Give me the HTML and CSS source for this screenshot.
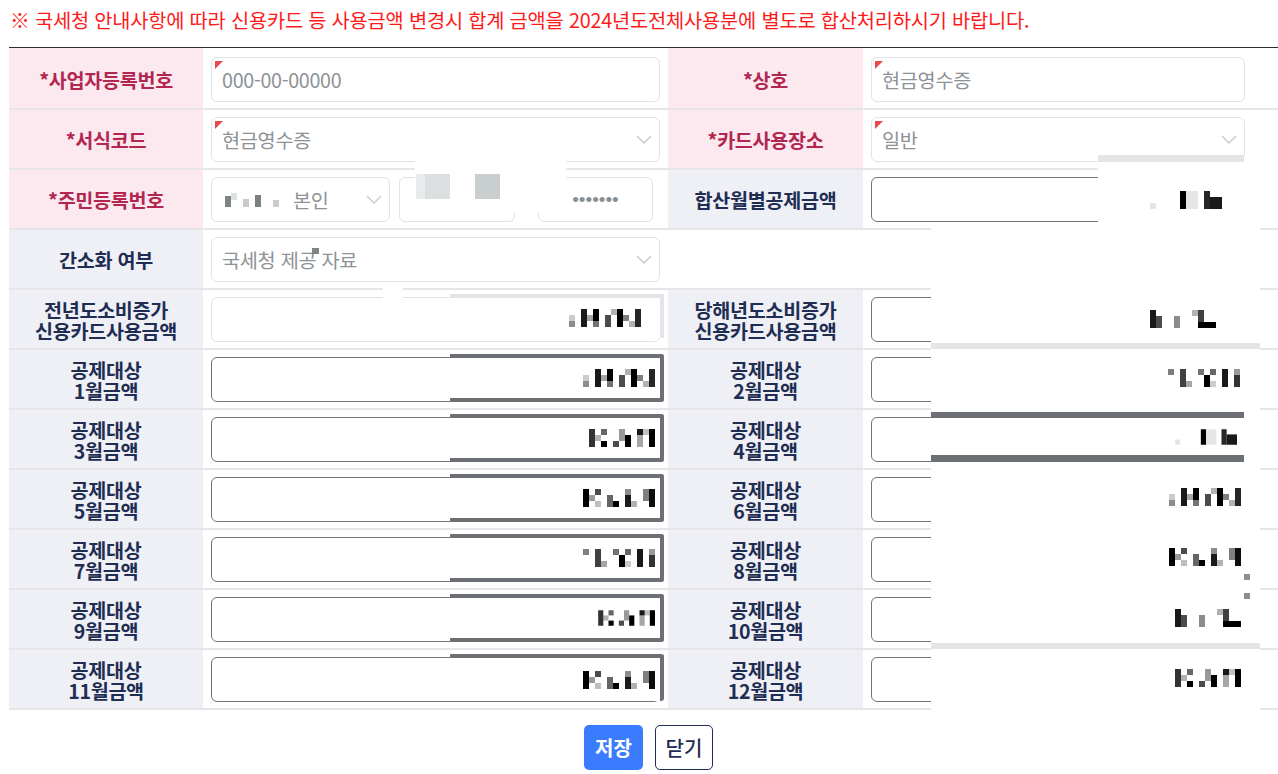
FILE: index.html
```html
<!DOCTYPE html>
<html lang="ko">
<head>
    <meta charset="UTF-8">
    <meta name="viewport" content="width=device-width, initial-scale=1">
    <title>신용카드 사용금액</title>
    <link rel="stylesheet" href="styles.css">
</head>
<body>

<!-- 모자이크 패턴 -->
<svg class="defs" aria-hidden="true">
    <symbol id="mz1" viewBox="0 0 72 18">
        <rect x="0" y="6" width="6" height="6" fill-opacity=".2"/>
        <rect x="0" y="12" width="6" height="6" fill-opacity=".45"/>
        <rect x="12" y="0" width="6" height="18" fill-opacity=".9"/>
        <rect x="18" y="6" width="6" height="6" fill-opacity=".35"/>
        <rect x="24" y="0" width="6" height="12" fill-opacity="1"/>
        <rect x="24" y="12" width="6" height="6" fill-opacity=".55"/>
        <rect x="36" y="6" width="6" height="12" fill-opacity=".7"/>
        <rect x="42" y="0" width="6" height="6" fill-opacity=".3"/>
        <rect x="48" y="0" width="6" height="18" fill-opacity="1"/>
        <rect x="54" y="6" width="6" height="6" fill-opacity=".5"/>
        <rect x="60" y="12" width="6" height="6" fill-opacity=".3"/>
        <rect x="66" y="0" width="6" height="18" fill-opacity=".85"/>
    </symbol>
    <symbol id="mz2" viewBox="0 0 72 18">
        <rect x="6" y="0" width="6" height="18" fill-opacity=".8"/>
        <rect x="12" y="6" width="6" height="6" fill-opacity=".3"/>
        <rect x="18" y="0" width="6" height="6" fill-opacity=".6"/>
        <rect x="18" y="12" width="6" height="6" fill-opacity="1"/>
        <rect x="30" y="12" width="6" height="6" fill-opacity=".7"/>
        <rect x="36" y="0" width="6" height="12" fill-opacity=".4"/>
        <rect x="42" y="6" width="6" height="12" fill-opacity="1"/>
        <rect x="54" y="0" width="6" height="6" fill-opacity=".9"/>
        <rect x="54" y="6" width="6" height="12" fill-opacity=".35"/>
        <rect x="60" y="0" width="6" height="6" fill-opacity=".25"/>
        <rect x="66" y="0" width="6" height="18" fill-opacity="1"/>
    </symbol>
    <symbol id="mz3" viewBox="0 0 72 18">
        <rect x="0" y="0" width="6" height="18" fill-opacity="1"/>
        <rect x="6" y="6" width="6" height="6" fill-opacity=".4"/>
        <rect x="12" y="0" width="6" height="6" fill-opacity=".7"/>
        <rect x="12" y="12" width="6" height="6" fill-opacity=".25"/>
        <rect x="24" y="6" width="6" height="12" fill-opacity=".6"/>
        <rect x="30" y="12" width="6" height="6" fill-opacity="1"/>
        <rect x="42" y="0" width="6" height="6" fill-opacity=".45"/>
        <rect x="42" y="6" width="6" height="12" fill-opacity=".9"/>
        <rect x="48" y="12" width="6" height="6" fill-opacity=".3"/>
        <rect x="60" y="0" width="6" height="12" fill-opacity=".5"/>
        <rect x="66" y="0" width="6" height="18" fill-opacity=".95"/>
    </symbol>
    <symbol id="mz4" viewBox="0 0 72 18">
        <rect x="0" y="0" width="6" height="6" fill-opacity=".5"/>
        <rect x="12" y="0" width="6" height="18" fill-opacity=".75"/>
        <rect x="18" y="12" width="6" height="6" fill-opacity=".35"/>
        <rect x="30" y="0" width="6" height="6" fill-opacity=".55"/>
        <rect x="36" y="6" width="6" height="12" fill-opacity="1"/>
        <rect x="42" y="0" width="6" height="6" fill-opacity=".6"/>
        <rect x="42" y="12" width="6" height="6" fill-opacity=".2"/>
        <rect x="54" y="0" width="6" height="18" fill-opacity=".9"/>
        <rect x="66" y="0" width="6" height="6" fill-opacity=".4"/>
        <rect x="66" y="6" width="6" height="12" fill-opacity=".8"/>
    </symbol>
    <symbol id="mz5" viewBox="0 0 72 18">
        <rect x="0" y="12" width="6" height="6" fill-opacity=".1"/>
        <rect x="30" y="0" width="6" height="18" fill-opacity="1"/>
        <rect x="36" y="0" width="12" height="18" fill-opacity=".1"/>
        <rect x="54" y="0" width="6" height="18" fill-opacity=".85"/>
        <rect x="60" y="6" width="12" height="12" fill-opacity=".9"/>
    </symbol>
    <symbol id="mz6" viewBox="0 0 72 18">
        <rect x="0" y="0" width="6" height="18" fill-opacity=".9"/>
        <rect x="6" y="6" width="6" height="12" fill-opacity=".7"/>
        <rect x="24" y="6" width="6" height="12" fill-opacity=".45"/>
        <rect x="42" y="0" width="6" height="6" fill-opacity=".3"/>
        <rect x="48" y="0" width="6" height="12" fill-opacity=".75"/>
        <rect x="48" y="12" width="18" height="6" fill-opacity="1"/>
    </symbol>
    <symbol id="chev" viewBox="0 0 16 9">
        <polyline points="1,1 8,8 15,1" fill="none" stroke="#c8c9cb" stroke-width="1.4"/>
    </symbol>
</svg>

<div class="page">
    <p class="notice">※ 국세청 안내사항에 따라 신용카드 등 사용금액 변경시 합계 금액을 2024년도전체사용분에 별도로 합산처리하시기 바랍니다.</p>

    <table class="form-table">
        <colgroup>
            <col class="c-label"><col class="c-field"><col class="c-label2"><col class="c-field2">
        </colgroup>
        <tbody>
            <tr>
                <th class="req">*사업자등록번호</th>
                <td><div class="field req"><span>000-00-00000</span></div></td>
                <th class="req">*상호</th>
                <td class="c4"><div class="field req"><span>현금영수증</span></div></td>
            </tr>
            <tr>
                <th class="req">*서식코드</th>
                <td><div class="field req select"><span>현금영수증</span><svg class="chev"><use href="#chev"/></svg></div></td>
                <th class="req">*카드사용장소</th>
                <td class="c4"><div class="field req select"><span>일반</span><svg class="chev"><use href="#chev"/></svg></div></td>
            </tr>
            <tr>
                <th class="req">*주민등록번호</th>
                <td>
                    <div class="multi">
                        <div class="field select f-rel">
                            <svg class="mz-id" width="62" height="14" viewBox="0 0 62 14">
                                <rect x="0" y="3" width="6" height="11" fill="#7e8484"/>
                                <rect x="6" y="0" width="6" height="7" fill="#dfe1e1"/>
                                <rect x="18" y="6" width="6" height="8" fill="#c9cccc"/>
                                <rect x="30" y="2" width="6" height="12" fill="#7b8181"/>
                                <rect x="48" y="7" width="6" height="7" fill="#c9cccc"/>
                            </svg>
                            <span>본인</span><svg class="chev"><use href="#chev"/></svg>
                        </div>
                        <div class="field f-name"></div>
                        <div class="field f-pw"><span class="dots">•••••••</span></div>
                    </div>
                </td>
                <th>합산월별공제금액</th>
                <td class="c4"><div class="field edit"></div></td>
            </tr>
            <tr>
                <th>간소화 여부</th>
                <td><div class="field select"><span>국세청 제공 자료</span><svg class="chev"><use href="#chev"/></svg></div></td>
                <td class="empty" colspan="2"></td>
            </tr>
            <tr>
                <th>전년도소비증가<br>신용카드사용금액</th>
                <td>
                    <div class="field">
                        <div class="cover light"><svg class="mz gray wide"><use href="#mz1"/></svg></div>
                    </div>
                </td>
                <th>당해년도소비증가<br>신용카드사용금액</th>
                <td class="c4"><div class="field edit"></div></td>
            </tr>
            <tr>
                <th>공제대상<br>1월금액</th>
                <td><div class="field edit"><div class="cover"><svg class="mz"><use href="#mz1"/></svg></div></div></td>
                <th>공제대상<br>2월금액</th>
                <td class="c4"><div class="field edit"></div></td>
            </tr>
            <tr>
                <th>공제대상<br>3월금액</th>
                <td><div class="field edit"><div class="cover"><svg class="mz"><use href="#mz2"/></svg></div></div></td>
                <th>공제대상<br>4월금액</th>
                <td class="c4"><div class="field edit"></div></td>
            </tr>
            <tr>
                <th>공제대상<br>5월금액</th>
                <td><div class="field edit"><div class="cover"><svg class="mz"><use href="#mz3"/></svg></div></div></td>
                <th>공제대상<br>6월금액</th>
                <td class="c4"><div class="field edit"></div></td>
            </tr>
            <tr>
                <th>공제대상<br>7월금액</th>
                <td><div class="field edit"><div class="cover"><svg class="mz"><use href="#mz4"/></svg></div></div></td>
                <th>공제대상<br>8월금액</th>
                <td class="c4"><div class="field edit"></div></td>
            </tr>
            <tr>
                <th>공제대상<br>9월금액</th>
                <td><div class="field edit"><div class="cover"><svg class="mz short"><use href="#mz2"/></svg></div></div></td>
                <th>공제대상<br>10월금액</th>
                <td class="c4"><div class="field edit"></div></td>
            </tr>
            <tr>
                <th>공제대상<br>11월금액</th>
                <td><div class="field edit"><div class="cover top-only"><svg class="mz"><use href="#mz3"/></svg></div></div></td>
                <th>공제대상<br>12월금액</th>
                <td class="c4"><div class="field edit"></div></td>
            </tr>
        </tbody>
    </table>

    <div class="btn-bar">
        <button class="btn btn-save">저장</button>
        <button class="btn btn-close">닫기</button>
    </div>

    <!-- 가림 처리 -->
    <div class="blot blot-id"><i class="sq sq1"></i><i class="sq sq2"></i></div>
    <div class="blot blot-gong"><i class="sq sq3"></i></div>
    <div class="blot blot-notch"></div>

    <div class="blot blot-a">
        <svg class="mz m-a"><use href="#mz5"/></svg>
    </div>
    <div class="blot blot-b">
        <i class="bar bar-l1"></i>
        <i class="bar bar-d1"></i>
        <i class="bar bar-d2"></i>
        <i class="bar bar-l2"></i>
        <i class="sq sq4"></i>
        <i class="sq sq5"></i>
        <svg class="mz m-r5"><use href="#mz6"/></svg>
        <svg class="mz m-r6"><use href="#mz4"/></svg>
        <svg class="mz m-r7 short"><use href="#mz5"/></svg>
        <svg class="mz m-r8"><use href="#mz1"/></svg>
        <svg class="mz m-r9"><use href="#mz3"/></svg>
        <svg class="mz m-r10"><use href="#mz6"/></svg>
        <svg class="mz m-r11"><use href="#mz2"/></svg>
    </div>
</div>

</body>
</html>
```

FILE: styles.css
```css
html {
    overflow: hidden;
}

body {
    margin: 0;
    background: #fff;
    font-family: "Noto Sans CJK KR", "Noto Sans", sans-serif;
}

.defs {
    position: absolute;
    width: 0;
    height: 0;
}

.page {
    position: relative;
    width: 1288px;
    padding-left: 9px;
    box-sizing: border-box;
}

.notice {
    margin: 0;
    height: 47px;
    box-sizing: border-box;
    padding: 7px 0 0 1px;
    font-size: 19.8px;
    line-height: 26px;
    color: #ff1a1a;
    letter-spacing: -0.2px;
    white-space: nowrap;
}

/* 입력 테이블 */
.form-table {
    width: 1279px;
    border-collapse: collapse;
    table-layout: fixed;
    border-top: 1px solid #2e2e2e;
}

.c-label { width: 194px; }
.c-field { width: 465px; }
.c-label2 { width: 195px; }
.c-field2 { width: 425px; }

th, td {
    padding: 7px 8px 6px;
    border-bottom: 2px solid #e6e6e8;
    vertical-align: middle;
}

tr:first-child > th,
tr:first-child > td {
    padding-top: 9px;
}

th {
    background: #eef0f6;
    color: #1f2d52;
    font-size: 19.6px;
    font-weight: 700;
    line-height: 21px;
    letter-spacing: -0.3px;
    text-align: center;
    white-space: nowrap;
}

th.req {
    background: #fbe9ef;
    color: #b2264f;
}

td.c4 {
    padding-right: 43px;
}

td.empty {
    background: #fff;
}

.field {
    position: relative;
    display: flex;
    align-items: center;
    height: 45px;
    box-sizing: border-box;
    padding: 0 10px;
    border: 1px solid #e1e2e4;
    border-radius: 6px;
    background: #fff;
    color: #8d9296;
    font-size: 19.7px;
    letter-spacing: -0.3px;
    white-space: nowrap;
}

.field.edit {
    border-color: #747474;
}

.field.req::before {
    content: "";
    position: absolute;
    left: 3px;
    top: 3px;
    border-style: solid;
    border-width: 8px 8px 0 0;
    border-color: #e9494b transparent transparent transparent;
}

.field.select {
    padding-right: 7px;
}

.chev {
    width: 16px;
    height: 9px;
    margin-left: auto;
    flex: none;
}

/* 주민등록번호 */
.multi {
    display: flex;
}

.f-rel { width: 179px; }
.f-name { width: 116px; margin-left: 9px; }
.f-pw { width: 115px; margin-left: 23px; justify-content: center; }

.mz-id {
    flex: none;
    margin: 0 6px 0 3px;
}

.dots {
    font-family: "Liberation Sans", sans-serif;
    font-size: 19px;
    letter-spacing: 0;
    color: #8a8f93;
}

/* 가림 */
.cover {
    position: absolute;
    left: 238px;
    right: -5px;
    top: -4px;
    bottom: -1px;
    display: flex;
    align-items: center;
    justify-content: flex-end;
    padding-right: 5px;
    background: #fff;
    border: 4px solid #6c7075;
    border-left: none;
    border-radius: 0 3px 3px 0;
}

.cover.top-only {
    border-bottom: none;
    bottom: 0;
}

.cover.light {
    top: -4px;
    bottom: 3px;
    border-color: #e4e5e8;
    border-bottom: none;
    border-radius: 0;
}

.mz {
    width: 72px;
    height: 18px;
    color: #1b2f5b;
}

.mz.wide { width: 100px; }
.mz.short { width: 62px; }

.mz.gray {
    color: #747879;
}

.blot {
    position: absolute;
    background: #fff;
}

.sq, .bar {
    position: absolute;
    display: block;
}

.blot-id {
    left: 415px;
    top: 155px;
    width: 151px;
    height: 58px;
}

.sq1 { left: 1px; top: 19px; width: 34px; height: 25px; background: linear-gradient(90deg, #e8eaeb 9px, #dcdfe0 9px); }
.sq2 { left: 60px; top: 19px; width: 25px; height: 25px; background: #c9cfce; }

.blot-gong {
    left: 302px;
    top: 243px;
    width: 18px;
    height: 8px;
}

.sq3 { left: 10px; top: 5px; width: 7px; height: 6px; background: #7f8485; }

.blot-notch {
    left: 383px;
    top: 283px;
    width: 20px;
    height: 17px;
}

.blot-a {
    left: 1098px;
    top: 155px;
    width: 180px;
    height: 73px;
}

.blot-a::before {
    content: "";
    position: absolute;
    left: 0;
    top: 0;
    width: 146px;
    height: 7px;
    background: #e4e5e7;
}

.m-a { position: absolute; left: 52px; top: 36px; }

.blot-b {
    left: 931px;
    top: 228px;
    width: 329px;
    height: 484px;
}

.bar-l1 { left: 0; top: 115px; width: 329px; height: 6px; background: #e4e5e7; }
.bar-d1 { left: 0; top: 184px; width: 313px; height: 6px; background: #6c7075; }
.bar-d2 { left: 0; top: 227px; width: 313px; height: 7px; background: #6c7075; }
.bar-l2 { left: 0; top: 415px; width: 329px; height: 6px; background: #e4e5e7; }

.sq4 { left: 313px; top: 346px; width: 6px; height: 6px; background: #8e8e8e; }
.sq5 { left: 313px; top: 365px; width: 6px; height: 6px; background: #8e8e8e; }

.blot-b .mz { position: absolute; }
.m-r5 { left: 219px; top: 82px; }
.m-r6 { left: 237px; top: 141px; }
.m-r7 { left: 244px; top: 200px; }
.m-r8 { left: 238px; top: 260px; }
.m-r9 { left: 238px; top: 320px; }
.m-r10 { left: 244px; top: 381px; }
.m-r11 { left: 238px; top: 441px; }

/* 버튼 */
.btn-bar {
    display: flex;
    justify-content: center;
    gap: 12px;
    margin-top: 15px;
}

.btn {
    height: 45px;
    box-sizing: border-box;
    border-radius: 5px;
    font-family: inherit;
    font-size: 20px;
    padding: 0;
    cursor: pointer;
}

.btn-save {
    width: 59px;
    border: none;
    background: #3b7cff;
    color: #fff;
    font-weight: 700;
}

.btn-close {
    width: 58px;
    border: 1px solid #1f2d52;
    background: #fff;
    color: #1f2d52;
    font-weight: 500;
}
```
